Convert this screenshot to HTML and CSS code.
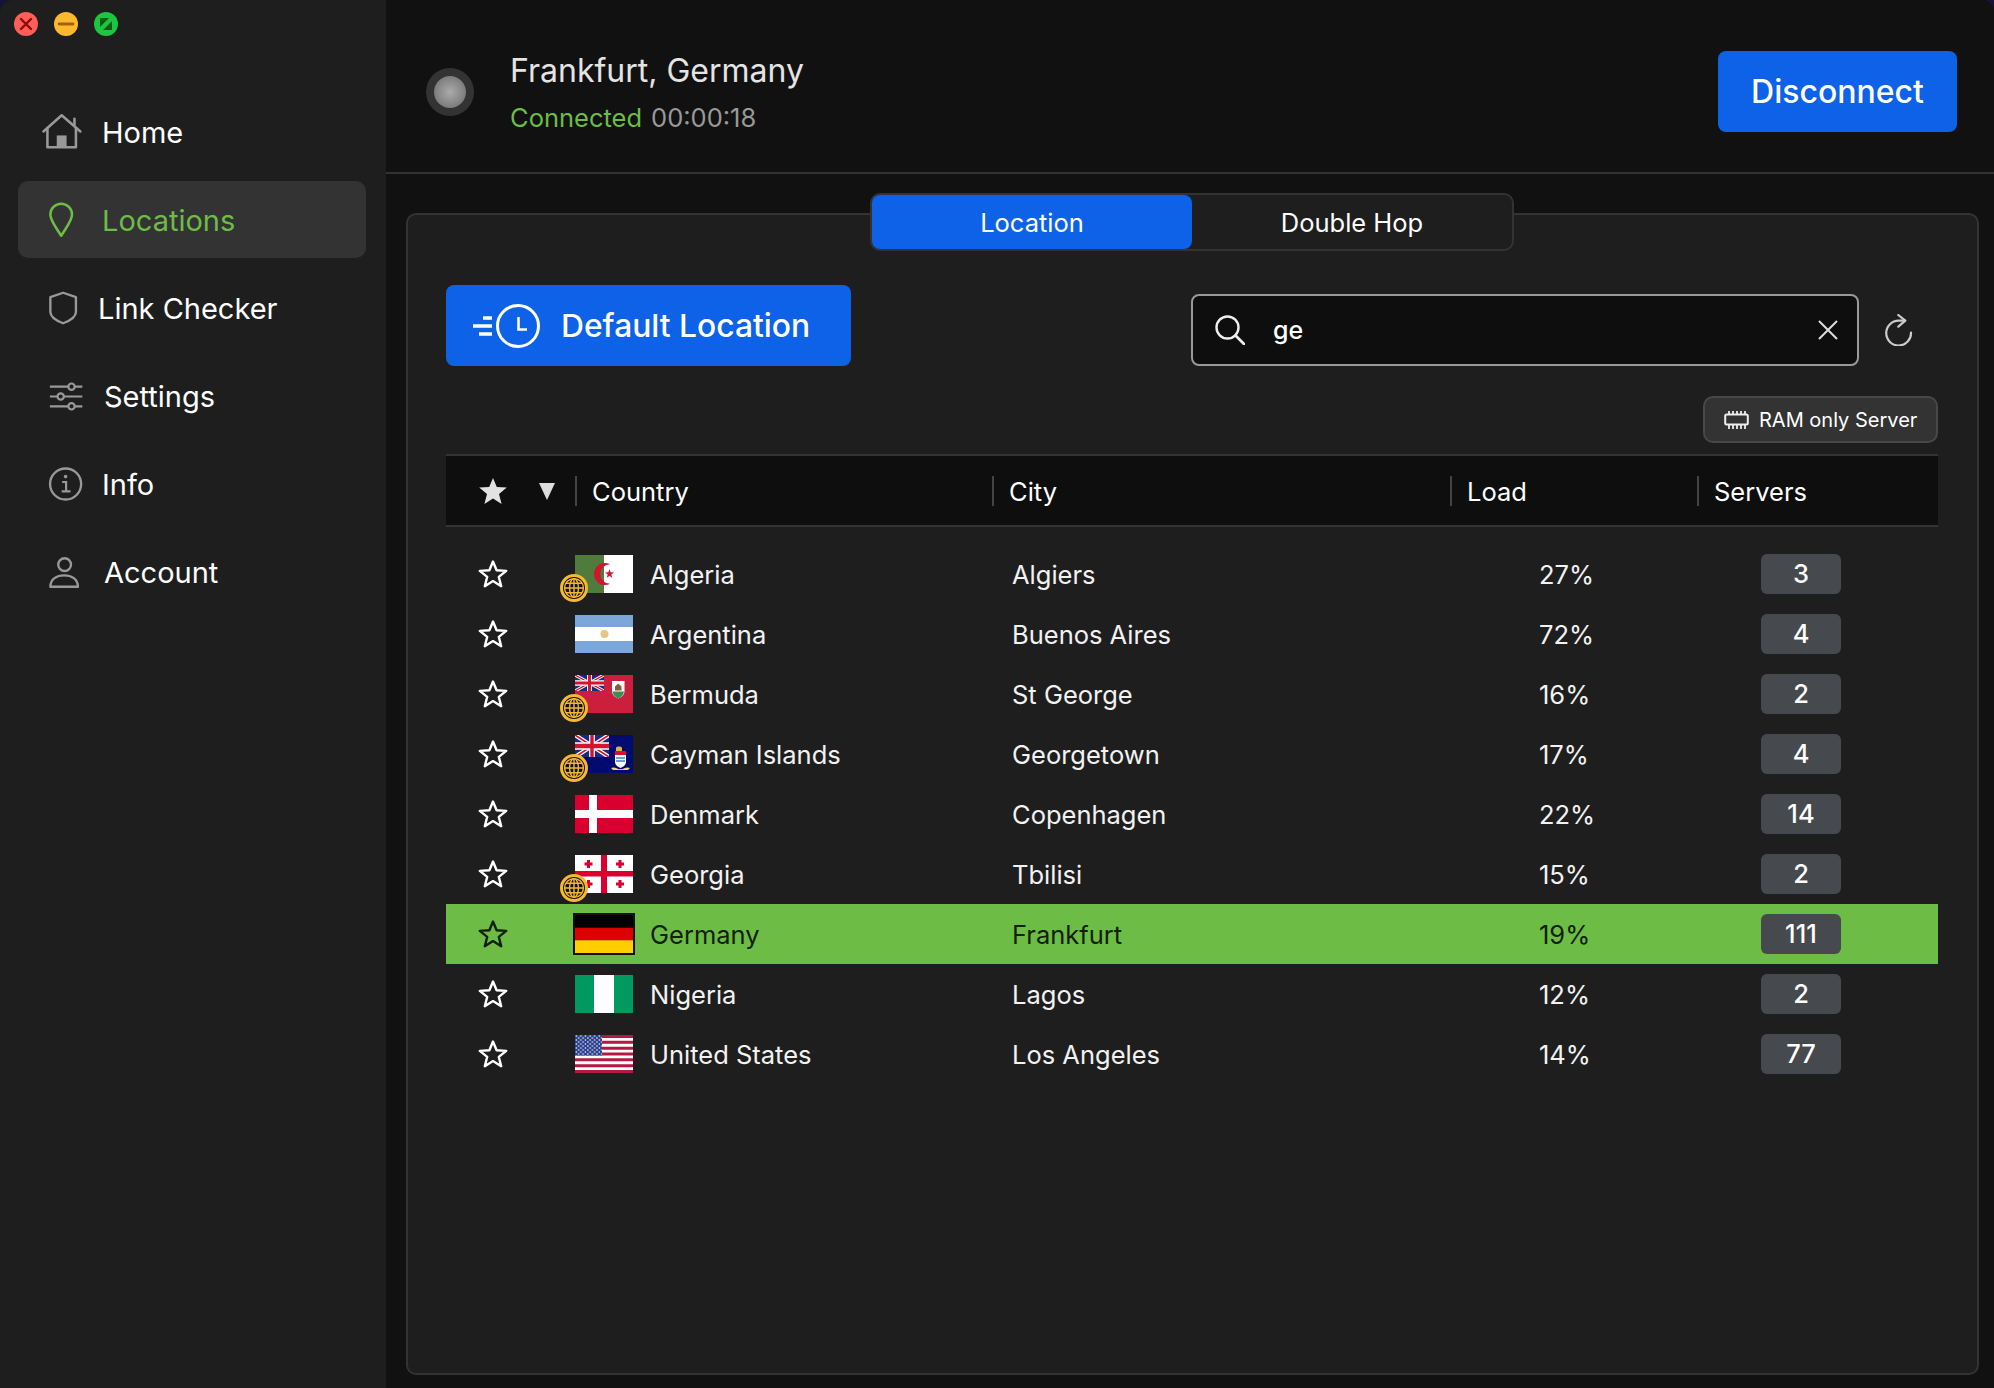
FILE: index.html
```html
<!DOCTYPE html>
<html lang="en">
<head>
<meta charset="utf-8">
<title>Locations</title>
<link rel="stylesheet" href="styles.css">
</head>
<body>
<svg class="defs" width="0" height="0" aria-hidden="true">
  <defs>
    <symbol id="star" viewBox="0 0 30 28"><polygon points="15,1.5 18.6,10.2 28.2,10.9 20.8,16.9 23.2,26.2 15,21.1 6.8,26.2 9.2,16.9 1.8,10.9 11.4,10.2" fill="none" stroke="currentColor" stroke-width="2.4" stroke-linejoin="round"/></symbol>
    <symbol id="globe" viewBox="0 0 22 22"><g fill="none" stroke="#f5b82e" stroke-width="1.4"><circle cx="11" cy="11" r="9.4"/><ellipse cx="11" cy="11" rx="4.4" ry="9.4"/><path d="M11 1.6V20.400M1.600 11H20.400M3 6.200H19M3 15.800H19"/></g></symbol>
    <symbol id="jack" viewBox="0 0 60 30" preserveAspectRatio="none">
      <rect width="60" height="30" fill="#1a2a80"/>
      <path d="M0 0L60 30M60 0L0 30" stroke="#fff" stroke-width="6"/>
      <path d="M0 0L60 30M60 0L0 30" stroke="#d5132f" stroke-width="2.4"/>
      <path d="M30 0V30M0 15H60" stroke="#fff" stroke-width="10"/>
      <path d="M30 0V30M0 15H60" stroke="#d5132f" stroke-width="6"/>
    </symbol>
    <pattern id="us-stars" width="4.6" height="4" patternUnits="userSpaceOnUse"><circle cx="1.3" cy="1" r=".8" fill="#fff"/><circle cx="3.6" cy="3" r=".8" fill="#fff"/></pattern>
  </defs>
</svg>
<div class="app">
  <aside class="sidebar">
    <div class="lights">
      <svg class="light" viewBox="0 0 24 24"><circle cx="12" cy="12" r="12" fill="#fd5f58"/><path d="M7 7L17 17M17 7L7 17" stroke="#8f0a0a" stroke-width="2.4" stroke-linecap="round"/></svg>
      <svg class="light" viewBox="0 0 24 24"><circle cx="12" cy="12" r="12" fill="#fdb92d"/><path d="M5 12H19" stroke="#a4600c" stroke-width="2.8" stroke-linecap="round"/></svg>
      <svg class="light" viewBox="0 0 24 24"><circle cx="12" cy="12" r="12" fill="#1dc63f"/><path d="M6 6H15L6 15ZM18 18H9L18 9Z" fill="#0b5a1c"/></svg>
    </div>
    <nav class="nav">
      <a class="nav-item"><svg class="nav-icon" viewBox="0 0 61 40"><g fill="none" stroke="#999" stroke-width="2.6" stroke-linejoin="round" stroke-linecap="round"><path d="M1.500 19.500L20 3L39 19.500"/><path d="M33 13V6.500"/><path d="M5.500 16V35.500H34.500V16"/></g><rect x="15" y="23.500" width="10" height="12" fill="#999"/></svg><span class="nav-label">Home</span></a>
      <a class="nav-item active"><svg class="nav-icon" viewBox="0 0 61 40"><path d="M19.500 36C14 27 8.500 21 8.500 14.500A11 11 0 0 1 30.500 14.500C30.500 21 25 27 19.500 36Z" fill="none" stroke="#6dbc45" stroke-width="2.6" stroke-linejoin="round"/></svg><span class="nav-label">Locations</span></a>
      <a class="nav-item"><svg class="nav-icon" viewBox="0 0 61 40"><path d="M21.500 4.500L34.500 9V24C34.500 29 28 33 21.500 35.500C15 33 8.500 29 8.500 24V9Z" fill="none" stroke="#999" stroke-width="2.4" stroke-linejoin="round"/></svg><span class="nav-label shift-left">Link Checker</span></a>
      <a class="nav-item"><svg class="nav-icon" viewBox="0 0 61 40"><g stroke="#999" stroke-width="2.2"><path d="M8 10.500H41M8 20.500H41M8 30.500H41"/><g fill="#1e1e1e"><circle cx="30" cy="10.500" r="3.2"/><circle cx="19" cy="20.500" r="3.2"/><circle cx="30" cy="30.500" r="3.2"/></g></g></svg><span class="nav-label shift-right">Settings</span></a>
      <a class="nav-item"><svg class="nav-icon" viewBox="0 0 61 40"><circle cx="24" cy="20" r="15.800" fill="none" stroke="#999" stroke-width="2.4"/><circle cx="24" cy="12.500" r="1.800" fill="#999"/><path d="M20.500 18H24.500V27M20 27.500H29" fill="none" stroke="#999" stroke-width="2.2"/></svg><span class="nav-label">Info</span></a>
      <a class="nav-item"><svg class="nav-icon" viewBox="0 0 61 40"><g fill="none" stroke="#999" stroke-width="2.4" stroke-linejoin="round"><circle cx="23" cy="12.500" r="6.500"/><path d="M8.500 35C8.500 27 15 23.500 22.500 23.500C30 23.500 36.500 27 36.500 35Z"/></g></svg><span class="nav-label shift-right">Account</span></a>
    </nav>
  </aside>
  <main class="main">
    <header class="topbar">
      <div class="dot"><span class="dot-core"></span></div>
      <div class="conn">
        <div class="conn-title">Frankfurt, Germany</div>
        <div class="conn-status"><span class="conn-state">Connected</span><span class="conn-time">00:00:18</span></div>
      </div>
      <button class="btn btn-disconnect">Disconnect</button>
    </header>
    <div class="tabs">
      <button class="tab tab-on">Location</button>
      <button class="tab">Double Hop</button>
    </div>
    <section class="panel">
      <div class="toolbar">
        <button class="btn btn-default">
          <svg class="default-icon" viewBox="0 0 72 44"><g fill="none" stroke="#fff"><circle cx="46" cy="22" r="20.500" stroke-width="3"/><path d="M46.500 13V25.500H55" stroke-width="2.6"/><path d="M11 14H20M1 22H20M7 30H20" stroke-width="3.4"/></g></svg>
          <span>Default Location</span>
        </button>
        <div class="search">
          <svg class="search-icon" viewBox="0 0 30 30"><circle cx="12.500" cy="12.500" r="11" fill="none" stroke="#eee" stroke-width="2.4"/><path d="M20.500 20.500L29 29" stroke="#eee" stroke-width="2.8" stroke-linecap="round"/></svg>
          <span class="search-text">ge</span>
          <svg class="search-clear" viewBox="0 0 22 22"><path d="M2 2L20 20M20 2L2 20" stroke="#ddd" stroke-width="2"/></svg>
        </div>
        <div class="refresh"><svg viewBox="0 0 28 32" width="28" height="32"><path d="M26 18.500A12.400 12.400 0 1 1 14 6.700H20" fill="none" stroke="#ccc" stroke-width="2.2" stroke-linecap="round"/><path d="M13.300 1L20.300 6.700L13.300 12.700" fill="none" stroke="#ccc" stroke-width="2.2" stroke-linecap="round" stroke-linejoin="round"/></svg></div>
      </div>
      <div class="filter-row">
        <button class="ram">
          <svg class="ram-icon" viewBox="0 0 25 18"><rect x="1.200" y="3.500" width="22.600" height="10" rx="1.500" fill="none" stroke="#eee" stroke-width="2"/><path d="M5 0V3M9 0V3M13 0V3M17 0V3M21 0V3M5 14V18M9 14V18M13 14V18M17 14V18M21 14V18" stroke="#eee" stroke-width="1.800"/></svg>
          <span>RAM only Server</span>
        </button>
      </div>
      <div class="thead">
        <div class="th-fav">
          <svg class="fav-star" viewBox="0 0 30 28"><polygon points="15,1 18.800,10 28.800,10.600 21,17 23.600,27 15,21.600 6.400,27 9,17 1.200,10.600 11.200,10" fill="#e2e2e2"/></svg>
          <span class="sort-tri"></span>
        </div>
        <div class="th">Country</div>
        <div class="th">City</div>
        <div class="th">Load</div>
        <div class="th">Servers</div>
      </div>
      <div class="tbody">
        <div class="row">
          <svg class="star"><use href="#star"/></svg>
          <div class="country"><span class="flag-wrap"><svg class="flag" viewBox="0 0 58 38"><rect width="58" height="38" fill="#fff"/><rect width="29" height="38" fill="#4f7c3d"/><path d="M35 9.200A11 11 0 1 0 35 28.800A9.800 9.800 0 1 1 35 9.200Z" fill="#d5132f"/><polygon points="34.500,14 35.600,17.300 39,17.400 36.300,19.500 37.300,22.800 34.500,20.900 31.700,22.800 32.700,19.500 30,17.400 33.400,17.300" fill="#d5132f"/></svg><span class="globe"><svg><use href="#globe"/></svg></span></span><span>Algeria</span></div>
          <div>Algiers</div><div>27%</div><div class="count">3</div>
        </div>
        <div class="row">
          <svg class="star"><use href="#star"/></svg>
          <div class="country"><span class="flag-wrap"><svg class="flag" viewBox="0 0 58 38"><rect width="58" height="38" fill="#7ba7da"/><rect y="12" width="58" height="14" fill="#fff"/><circle cx="29.500" cy="19" r="4" fill="#e6c684"/></svg></span><span>Argentina</span></div>
          <div>Buenos Aires</div><div>72%</div><div class="count">4</div>
        </div>
        <div class="row">
          <svg class="star"><use href="#star"/></svg>
          <div class="country"><span class="flag-wrap"><svg class="flag" viewBox="0 0 58 38"><rect width="58" height="38" fill="#cc1f3e"/><use href="#jack" width="29" height="16"/><path d="M37 6H49.500V16C49.500 20 46 22.500 43.200 23.500C40.500 22.500 37 20 37 16Z" fill="#fff"/><path d="M37.500 16.500H49C48.500 20 46 22.500 43.200 23.500C40.500 22.500 38 20 37.500 16.500Z" fill="#3f8a56"/><path d="M40 15.500V11.500L43.200 8.500L46.500 11.500V15.500Z" fill="#8a5a3a"/></svg><span class="globe"><svg><use href="#globe"/></svg></span></span><span>Bermuda</span></div>
          <div>St George</div><div>16%</div><div class="count">2</div>
        </div>
        <div class="row">
          <svg class="star"><use href="#star"/></svg>
          <div class="country"><span class="flag-wrap"><svg class="flag" viewBox="0 0 58 38"><rect width="58" height="38" fill="#010a6e"/><use href="#jack" width="34" height="22"/><path d="M41 13C41 11 47 11 47 13V16H41Z" fill="#d3b34a"/><rect x="40" y="16" width="11" height="4" fill="#d5132f"/><path d="M40 20H51V27C51 30 48 32 45.500 33C43 32 40 30 40 27Z" fill="#fff"/><path d="M41 23H50M41 26H50" stroke="#3f7fc4" stroke-width="1.400"/><path d="M36 33C40 31 43 35 45.500 34C48 35 51 31 55 33L53 35H38Z" fill="#e9d77a"/></svg><span class="globe"><svg><use href="#globe"/></svg></span></span><span>Cayman Islands</span></div>
          <div>Georgetown</div><div>17%</div><div class="count">4</div>
        </div>
        <div class="row">
          <svg class="star"><use href="#star"/></svg>
          <div class="country"><span class="flag-wrap"><svg class="flag" viewBox="0 0 58 38"><rect width="58" height="38" fill="#d9002f"/><path d="M14 0H22V38H14ZM0 15H58V23H0Z" fill="#fff"/></svg></span><span>Denmark</span></div>
          <div>Copenhagen</div><div>22%</div><div class="count">14</div>
        </div>
        <div class="row">
          <svg class="star"><use href="#star"/></svg>
          <div class="country"><span class="flag-wrap"><svg class="flag" viewBox="0 0 58 38"><rect width="58" height="38" fill="#fff"/><path d="M26 0H32V38H26ZM0 16H58V21.500H0Z" fill="#d9002f"/><path d="M12 5H15V7.500H17.500V10.500H15V13H12V10.500H9.500V7.500H12ZM43.500 5H46.500V7.500H49V10.500H46.500V13H43.500V10.500H41V7.500H43.500ZM12 25H15V27.500H17.500V30.500H15V33H12V30.500H9.500V27.500H12ZM43.500 25H46.500V27.500H49V30.500H46.500V33H43.500V30.500H41V27.500H43.500Z" fill="#d9002f"/></svg><span class="globe"><svg><use href="#globe"/></svg></span></span><span>Georgia</span></div>
          <div>Tbilisi</div><div>15%</div><div class="count">2</div>
        </div>
        <div class="row row-on">
          <svg class="star"><use href="#star"/></svg>
          <div class="country"><span class="flag-wrap flag-on"><svg class="flag" viewBox="0 0 58 38"><rect width="58" height="13" fill="#000"/><rect y="12.700" width="58" height="13" fill="#dd0000"/><rect y="25.400" width="58" height="12.600" fill="#ffce00"/></svg></span><span>Germany</span></div>
          <div>Frankfurt</div><div>19%</div><div class="count">111</div>
        </div>
        <div class="row">
          <svg class="star"><use href="#star"/></svg>
          <div class="country"><span class="flag-wrap"><svg class="flag" viewBox="0 0 58 38"><rect width="58" height="38" fill="#009a60"/><rect x="19" width="20" height="38" fill="#fff"/></svg></span><span>Nigeria</span></div>
          <div>Lagos</div><div>12%</div><div class="count">2</div>
        </div>
        <div class="row">
          <svg class="star"><use href="#star"/></svg>
          <div class="country"><span class="flag-wrap"><svg class="flag" viewBox="0 0 58 38"><rect width="58" height="38" fill="#fff"/><path d="M0 1.500H58M0 7.300H58M0 13.200H58M0 19H58M0 24.800H58M0 30.700H58M0 36.500H58" stroke="#b31942" stroke-width="2.900"/><rect width="27" height="20.500" fill="#2a3f8f"/><rect width="27" height="20.500" fill="url(#us-stars)"/></svg></span><span>United States</span></div>
          <div>Los Angeles</div><div>14%</div><div class="count">77</div>
        </div>
      </div>
    </section>
  </main>
</div>
</body>
</html>
```
FILE: styles.css
```css
* { box-sizing: border-box; }
html, body { margin: 0; height: 100%; }
body { background: #15133a; font-family: "Inter", "Liberation Sans", sans-serif; color: #fff; overflow: hidden; }
.defs { position: absolute; }
button { font-family: inherit; border: 0; padding: 0; margin: 0; color: #fff; }

.app { display: flex; height: 100vh; border-radius: 12px 12px 0 0; overflow: hidden; background: #111; }

.sidebar { flex: none; width: 386px; background: #1e1e1e; }
.lights { display: flex; gap: 16px; padding: 12px 0 0 14px; height: 93px; }
.light { width: 24px; height: 24px; }
.nav { display: flex; flex-direction: column; gap: 11px; padding: 0 20px 0 18px; }
.nav-item { display: flex; align-items: center; height: 77px; padding-left: 24px; border-radius: 10px; font-size: 29px; color: #fff; }
.nav-icon { flex: none; width: 60px; height: 40px; overflow: visible; }
.nav-label { padding-top: 2px; }
.nav-item.active { background: #333; color: #6dbc45; }
.shift-left { margin-left: -4px; }
.shift-right { margin-left: 2px; }

.main { flex: 1; min-width: 0; display: flex; flex-direction: column; padding-bottom: 13px; }
.topbar { flex: none; height: 174px; display: flex; align-items: center; padding: 11px 37px 0 40px; border-bottom: 2px solid #333; background: #111; }
.dot { width: 48px; height: 48px; border-radius: 50%; background: #333; display: flex; align-items: center; justify-content: center; }
.dot-core { width: 32px; height: 32px; border-radius: 50%; background: radial-gradient(circle, #aaa 0%, #8a8a8a 50%, #666 100%); }
.conn { margin-left: 36px; padding-top: 2px; }
.conn-title { font-size: 32px; line-height: 40px; color: #e4e4e4; }
.conn-status { margin-top: 11px; font-size: 25.5px; line-height: 32px; display: flex; gap: 9px; }
.conn-state { color: #6dbc45; }
.conn-time { color: #999; }

.btn { background: #0d62e8; border-radius: 8px; font-weight: 500; font-size: 32px; height: 81px; }
.btn-disconnect { margin-left: auto; width: 239px; }

.tabs { flex: none; align-self: flex-start; margin: 19px 0 -38px 484px; width: 644px; height: 58px; display: flex; position: relative; z-index: 1; border: 2px solid #333; border-radius: 10px; background: #1e1e1e; }
.tab { flex: 1; font-size: 25.5px; background: none; border-radius: 8px; }
.tab-on { background: #0d62e8; }

.panel { flex: 1; min-height: 0; margin: 0 15px 0 20px; padding: 70px 39px 0 38px; background: #1e1e1e; border: 2px solid #333; border-radius: 10px; }

.toolbar { display: flex; align-items: flex-end; }
.btn-default { width: 405px; display: flex; align-items: center; padding-left: 26px; gap: 17px; font-size: 31.8px; }
.default-icon { width: 72px; height: 44px; flex: none; }
.search { margin-left: auto; width: 668px; height: 72px; display: flex; align-items: center; padding: 0 18px 0 22px; background: #0e0e0e; border: 2px solid #999; border-radius: 8px; }
.search-icon { width: 30px; height: 30px; flex: none; }
.search-text { margin-left: 28px; font-size: 25px; font-weight: 500; }
.search-clear { margin-left: auto; width: 22px; height: 22px; }
.refresh { flex: none; width: 79px; height: 72px; display: flex; align-items: center; justify-content: center; }

.filter-row { margin-top: 30px; display: flex; justify-content: flex-end; }
.ram { display: flex; align-items: center; gap: 10px; width: 235px; height: 47px; padding-left: 19px; background: #333; border: 2px solid #484848; border-radius: 10px; font-size: 20px; }
.ram-icon { width: 25px; height: 18px; flex: none; }

.thead { margin-top: 11px; height: 73px; display: grid; grid-template-columns: 129px 417px 458px 247px 1fr; align-items: center; background: #0e0e0e; border-top: 2px solid #333; border-bottom: 2px solid #333; }
.th-fav { display: flex; align-items: center; padding-left: 32px; }
.fav-star { width: 30px; height: 28px; flex: none; }
.sort-tri { margin: 2px 0 0 31px; width: 0; height: 0; border-left: 8px solid transparent; border-right: 8px solid transparent; border-top: 17px solid #ddd; }
.th { height: 30px; line-height: 32px; padding-left: 15px; border-left: 2px solid #444; font-size: 25.5px; }

.tbody { padding-top: 17px; }
.row { height: 60px; display: grid; grid-template-columns: 129px 437px 527px 222px 80px; align-items: center; font-size: 25.5px; color: #f2f2f2; }
.row-on { background: #6dbc45; color: #12200c; }
.star { width: 30px; height: 28px; margin-left: 32px; color: #fff; }
.row-on .star { color: #12200c; }
.country { display: flex; align-items: center; gap: 17px; }
.flag-wrap { position: relative; display: block; width: 58px; height: 38px; flex: none; }
.flag { display: block; width: 58px; height: 38px; }
.flag-on { outline: 2px solid #111; }
.globe { position: absolute; left: -15px; top: 19px; width: 28px; height: 28px; border-radius: 50%; background: #111; border: 3px solid #f5b82e; }
.globe svg { display: block; width: 22px; height: 22px; }
.count { width: 80px; height: 40px; line-height: 40px; text-align: center; background: #46494d; border-radius: 6px; color: #fff; font-weight: 500; }
```
